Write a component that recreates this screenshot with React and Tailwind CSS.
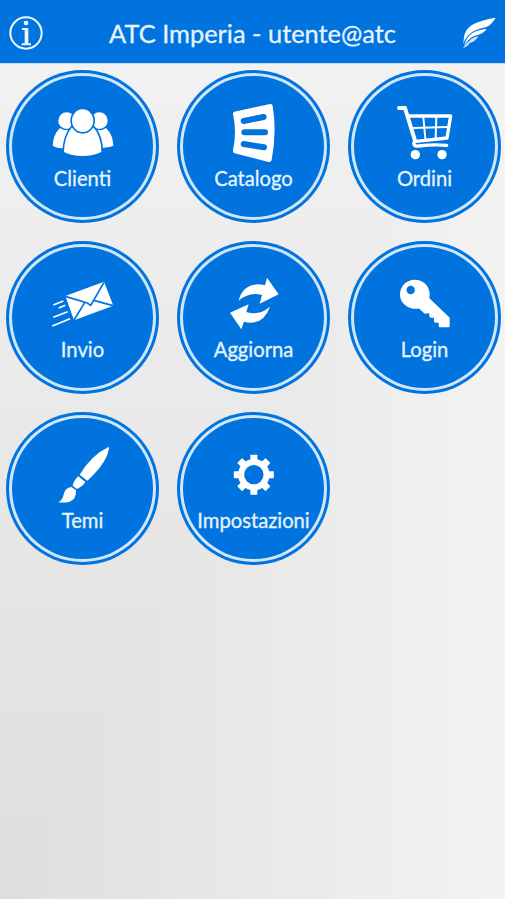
import clsx from 'clsx';

const BLUE = '#0073de';

function ClientiIcon() {
  return (
    <g fill="#fff">
      <ellipse cx="200" cy="171" rx="25" ry="25" />
      <ellipse cx="298" cy="171" rx="25" ry="25" />
      <path d="M180 193 Q198 205 216 195 L200 254 Q172 255 158 246 Q159 213 180 193Z" />
      <path d="M318 193 Q300 205 282 195 L298 252 Q326 252 340 246 Q339 213 318 193Z" />
      <g stroke={BLUE} strokeWidth="10" paintOrder="stroke">
        <path d="M216 191 Q248 222 280 191 Q305 220 304 265 Q280 277 248 277 Q214 277 192 265 Q193 218 216 191Z" />
        <ellipse cx="248" cy="171" rx="32" ry="34" />
      </g>
    </g>
  );
}

function CatalogoIcon() {
  return (
    <g>
      <path
        d="M190 144 L297 121 Q304 120 305 127 Q318 205 302 289 Q300 296 293 295 L191 269 Q185 267 186 260 Q198 205 186 151 Q185 146 190 144Z"
        fill="#fff"
      />
      <path d="M218 172 L278 160 M220 206 L282 206 M218 241 L279 251" stroke={BLUE} strokeWidth="18" strokeLinecap="round" />
    </g>
  );
}

function OrdiniIcon() {
  return (
    <g fill="none" stroke="#fff" strokeLinecap="round" strokeLinejoin="round">
      <path d="M171 133 H189 L219 231" strokeWidth="12" />
      <path d="M202 157 H326 L315 223 L222 233 Q212 236 217 244 Q220 249 230 247 Q272 241 314 245" strokeWidth="10" />
      <path d="M211 193 L318 190 M244 160 L250 226 M283 160 L281 224" strokeWidth="6" />
      <circle cx="220" cy="273" r="14" fill="#fff" stroke="none" />
      <circle cx="300" cy="273" r="14" fill="#fff" stroke="none" />
    </g>
  );
}

function InvioIcon() {
  return (
    <g>
      <path d="M196 184 L312 141 L340 213 L222 257Z" fill="#fff" />
      <path
        d="M196 185 L262 205 L272 212 L278 202 L312 143 M222 256 L254 204 M339 213 L281 197"
        fill="none"
        stroke={BLUE}
        strokeWidth="5"
      />
      <path d="M160 211 L190 199 M176 220 L196 212 M160 248 L203 231 M157 274 L210 252" stroke="#fff" strokeWidth="5" />
    </g>
  );
}

function AggiornaIcon() {
  return (
    <g fill="#fff">
      <path d="M203 198 Q214 151 260 149 Q272 149 282 152 L288 129 L323 179 L266 207 L273 181 Q235 170 203 198Z" />
      <path d="M297 216 Q280 264 238 264 Q228 264 219 261 L211 284 L177 234 L233 209 L226 232 Q264 244 297 216Z" />
    </g>
  );
}

function LoginIcon() {
  return (
    <g>
      <path
        d="M218 135 C246 135 264 156 263 181 L262 191 L321 247 Q323 249 323 253 V275 Q323 278 319 278 H294 Q290 278 290 274 V264 H280 Q276 264 276 260 V249 H267 Q263 249 262 245 V236 L248 237 L232 222 C203 226 174 209 174 180 C174 154 193 135 218 135Z"
        fill="#fff"
      />
      <circle cx="206" cy="166" r="12.5" fill={BLUE} />
    </g>
  );
}

function TemiIcon() {
  return (
    <g fill="#fff">
      <path d="M327 123 Q326 166 262 225 L239 207 Q275 147 327 123Z" />
      <path d="M235 212 L256 229 Q248 242 231 250 L218 240 Q222 223 235 212Z" />
      <path d="M214 244 L228 254 Q230 282 207 289 Q190 292 175 290 Q188 284 191 266 Q195 246 214 244Z" />
    </g>
  );
}

function ImpostazioniIcon() {
  return (
    <g fill="#fff">
      {[0, 45, 90, 135].map((deg) => (
        <rect key={deg} x="238" y="147" width="21" height="120" rx="2" transform={`rotate(${deg} 248.5 207)`} />
      ))}
      <circle cx="248.5" cy="207" r="47" />
      <circle cx="248.5" cy="207" r="29" fill={BLUE} />
    </g>
  );
}

const MENU = [
  { label: 'Clienti', Icon: ClientiIcon },
  { label: 'Catalogo', Icon: CatalogoIcon },
  { label: 'Ordini', Icon: OrdiniIcon },
  { label: 'Invio', Icon: InvioIcon },
  { label: 'Aggiorna', Icon: AggiornaIcon },
  { label: 'Login', Icon: LoginIcon },
  { label: 'Temi', Icon: TemiIcon },
  { label: 'Impostazioni', Icon: ImpostazioniIcon },
];

function MenuButton({ label, Icon }) {
  return (
    <button className="h-[153px] w-[153px] rounded-full bg-[#0073de] p-[3px]">
      <span className="block h-full w-full rounded-full bg-[#d0e7fb] p-[3px]">
        <span className="flex h-full w-full flex-col items-center rounded-full bg-[#0073de] pt-[26px]">
          <svg viewBox="150 115 195 186" className="h-[62px] w-[65px] shrink-0">
            <Icon />
          </svg>
          <span className="mt-[2px] text-[20.2px] leading-[24px] whitespace-nowrap text-[#e6f3fd] [-webkit-text-stroke:0.3px_#e6f3fd]">
            {label}
          </span>
        </span>
      </span>
    </button>
  );
}

function Header() {
  return (
    <header className="flex h-[64px] items-center justify-between border-b border-[#c3dff7] bg-[#0073de] pr-[9px] pl-[9px]">
      <svg viewBox="0 0 102 102" className="mt-[2px] h-[34px] w-[34px]">
        <circle cx="51" cy="51" r="47" fill="none" stroke="#f0f8ff" strokeWidth="6" />
        <circle cx="51" cy="21" r="7" fill="#f0f8ff" />
        <path d="M39 39 H55 M38 85 H66" fill="none" stroke="#f0f8ff" strokeWidth="6" />
        <path d="M47 37 H58 V84 H47Z" fill="#f0f8ff" />
      </svg>
      <h1 className="mt-[3px] text-[25.4px] leading-[32px] whitespace-nowrap text-[#e6f3fd] [-webkit-text-stroke:0.3px_#e6f3fd]">
        ATC Imperia - utente@atc
      </h1>
      <svg viewBox="0 0 102 96" className="mt-[2px] h-[32px] w-[34px]">
        <path d="M101 2 Q57 9 31 23 Q9 36 6 61 Q5 71 4 80 Q13 54 36 42 Q51 35 71 31 Q88 25 101 2Z" fill="#fff" />
        <path d="M74 36 Q46 38 30 49 Q13 62 6 87 Q20 63 38 56 Q64 52 74 36Z" fill="#fff" />
        <path d="M49 57 Q32 60 22 71 Q11 81 3 93 Q17 89 23 78 Q42 73 49 57Z" fill="#cfe5fa" />
      </svg>
    </header>
  );
}

export default function App() {
  return (
    <div className="h-[900px] w-[507px] overflow-hidden bg-white font-[Lato,sans-serif]">
      <main
        className={clsx(
          'flex h-[899px] w-[505px] flex-col bg-blend-lighten',
          'bg-[linear-gradient(to_right,#dedede,#f3f3f3),linear-gradient(to_top,#dedede,#f3f3f3)]'
        )}
      >
        <Header />
        <div className="grid grid-cols-[repeat(3,153px)] gap-[18px] pt-[6px] pl-[6px]">
          {MENU.map((item) => (
            <MenuButton key={item.label} {...item} />
          ))}
        </div>
      </main>
    </div>
  );
}
